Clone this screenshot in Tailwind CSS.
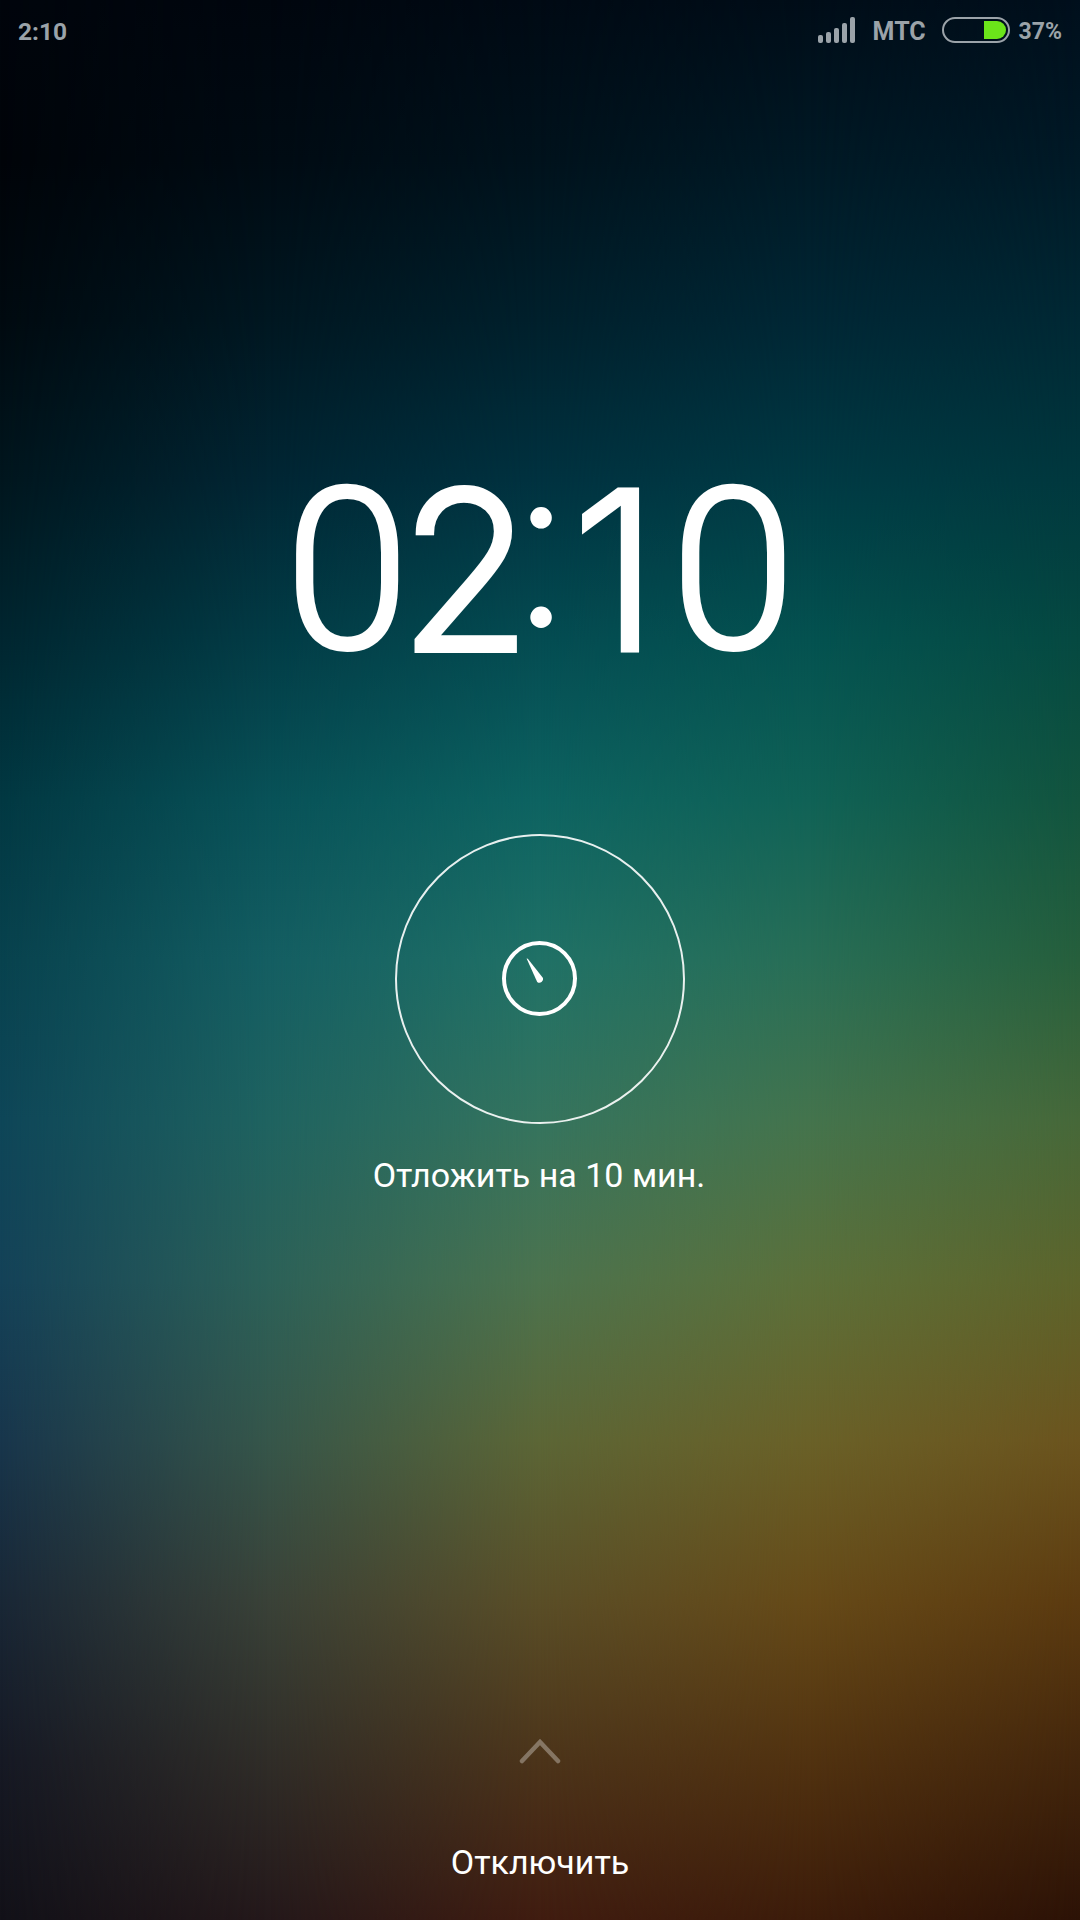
<!DOCTYPE html>
<html lang="ru">
<head>
<meta charset="utf-8">
<title>Будильник</title>
<script src="https://cdn.jsdelivr.net/npm/@tailwindcss/browser@4"></script>
</head>
<body class="bg-black">
<div class="relative isolate flex h-[1920px] w-[1080px] flex-col items-center overflow-hidden font-['Roboto',sans-serif] text-white">
  <!-- wallpaper: vertical colour columns cross-faded from left to right -->
  <div class="absolute inset-0 -z-10 bg-[linear-gradient(rgb(0,5,12),rgb(0,4,9),rgb(0,10,16),rgb(0,22,30),rgb(0,38,48),rgb(2,56,66),rgb(8,66,78),rgb(14,70,88),rgb(20,66,88),rgb(24,54,76),rgb(25,39,54),rgb(22,25,36),rgb(18,17,24))]"></div>
  <div class="absolute inset-0 -z-10 mask-[linear-gradient(to_right,transparent,black_25%)] bg-[linear-gradient(rgb(0,6,14),rgb(0,11,19),rgb(0,23,33),rgb(1,38,52),rgb(2,60,70),rgb(8,82,88),rgb(20,94,98),rgb(31,99,96),rgb(44,97,88),rgb(54,86,74),rgb(58,66,56),rgb(48,45,40),rgb(36,24,26))]"></div>
  <div class="absolute inset-0 -z-10 mask-[linear-gradient(to_right,transparent_25%,black_50%)] bg-[linear-gradient(rgb(0,10,20),rgb(0,18,28),rgb(0,32,44),rgb(0,50,64),rgb(4,76,82),rgb(13,99,97),rgb(32,113,102),rgb(53,116,94),rgb(76,115,78),rgb(92,102,54),rgb(90,78,39),rgb(76,52,26),rgb(64,28,16))]"></div>
  <div class="absolute inset-0 -z-10 mask-[linear-gradient(to_right,transparent_50%,black_75%)] bg-[linear-gradient(rgb(0,13,24),rgb(0,25,37),rgb(0,39,53),rgb(0,58,68),rgb(4,82,80),rgb(16,98,86),rgb(40,110,86),rgb(68,116,77),rgb(92,112,58),rgb(106,97,40),rgb(102,74,24),rgb(81,50,16),rgb(60,28,10))]"></div>
  <div class="absolute inset-0 -z-10 mask-[linear-gradient(to_right,transparent_75%,black)] bg-[linear-gradient(rgb(0,15,28),rgb(0,25,38),rgb(0,40,52),rgb(0,56,62),rgb(5,73,65),rgb(18,84,62),rgb(38,95,60),rgb(70,104,57),rgb(93,100,43),rgb(107,84,30),rgb(92,59,16),rgb(67,38,12),rgb(44,18,6))]"></div>

  <header class="flex h-[63px] w-full items-center justify-between px-[18px] font-bold text-[#9ba3a9]">
    <span class="text-[24.5px] leading-[63px]">2:10</span>
    <div class="flex items-center">
      <svg class="mr-[17px] mb-[3px] h-[26px] w-[38px]" viewBox="0 0 38 26" fill="currentColor">
        <rect x="0" y="18" width="5" height="8" rx="2"/><rect x="8" y="15" width="5" height="11" rx="2"/><rect x="16" y="11" width="5" height="15" rx="2"/><rect x="24" y="6" width="5" height="20" rx="2"/><rect x="32" y="0" width="5" height="26" rx="2"/>
      </svg>
      <span class="mr-[16px] w-[53px] text-[25px] leading-[63px]">МТС</span>
      <svg class="mr-[9px] mb-[3px] h-[26px] w-[68px]" viewBox="0 0 68 26" fill="none">
        <rect x="1" y="1" width="66" height="24" rx="12" stroke="currentColor" stroke-width="2"/>
        <path d="M42 4H55A9 9 0 0 1 55 22H42Z" fill="#6be51a"/>
      </svg>
      <span class="text-[23px] leading-[60px]">37%</span>
    </div>
  </header>

  <main class="flex w-full flex-col items-center">
    <div class="mt-[381px] flex h-[250px] w-[492px] items-center font-['Inter',sans-serif] text-[223px] leading-[250px] font-light">
      <span class="flex w-[106px] translate-y-[3px] justify-center font-['Roboto',sans-serif] text-[224px] [-webkit-text-stroke:4px_white]">0</span>
      <span class="ml-[12px] flex w-[106px] translate-y-[1px] justify-center [-webkit-text-stroke:4px_white]"><span class="scale-x-[.97]">2</span></span>
      <span class="ml-[10px] flex w-[26px] -translate-y-[25px] justify-center font-extralight [-webkit-text-stroke:4px_white]">:</span>
      <span class="ml-[32px] flex w-[58px] translate-y-[1px] justify-center [-webkit-text-stroke:3px_white]">1</span>
      <span class="ml-[36px] flex w-[106px] translate-y-[3px] justify-center font-['Roboto',sans-serif] text-[224px] [-webkit-text-stroke:4px_white]">0</span>
    </div>
    <button class="mt-[140px] flex size-[290px] items-center justify-center rounded-full border-2 border-white/90">
      <svg class="size-[76px]" viewBox="0 0 76 76" fill="none">
        <circle cx="37.5" cy="37.5" r="35.5" stroke="white" stroke-width="4"/>
        <path d="M24.6 17.6L25.8 17.8L41 37A3.7 3.7 0 0 1 35.2 41Z" fill="white"/>
      </svg>
    </button>
    <p class="mt-[27px] mr-[2px] text-[34px] leading-[48px]">Отложить на 10 мин.</p>
  </main>

  <footer class="mt-auto flex flex-col items-center pb-[34px]">
    <svg class="mb-[74px] h-[26px] w-[42px]" viewBox="0 0 42 26" fill="none"><path d="M3 23L21 4L39 23" stroke="#fff" stroke-opacity=".32" stroke-width="4.5" stroke-linecap="round"/></svg>
    <button class="text-[34px] leading-[48px]">Отключить</button>
  </footer>
</div>
</body>
</html>
